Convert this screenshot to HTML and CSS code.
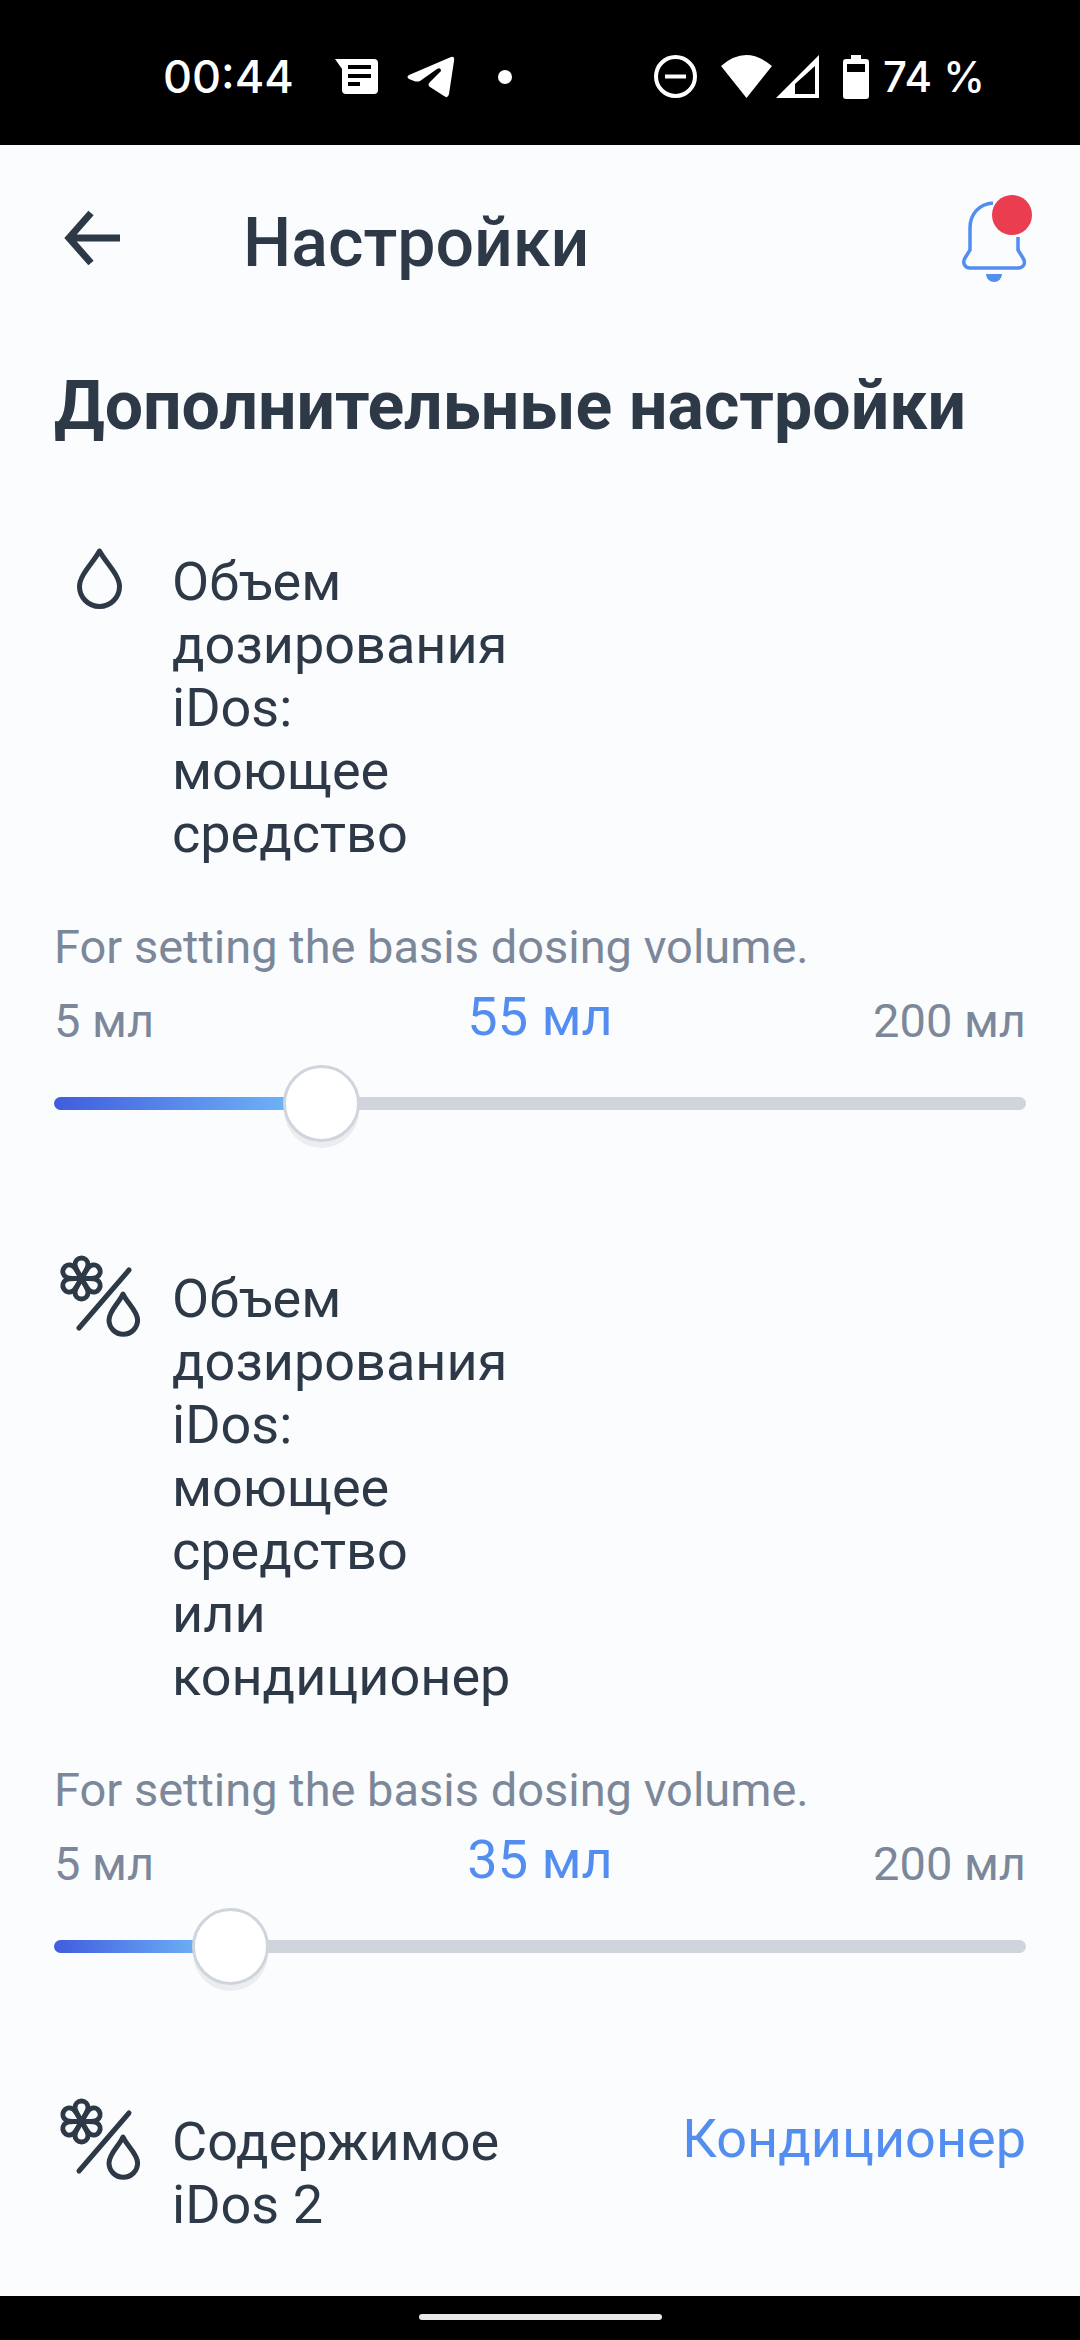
FILE: index.html
```html
<!DOCTYPE html>
<html lang="ru">
<head>
<meta charset="utf-8">
<meta name="viewport" content="width=device-width, initial-scale=1">
<title>Настройки</title>
<link rel="stylesheet" href="styles.css">
</head>
<body>
<svg class="sprite" aria-hidden="true">
  <symbol id="flower-drop" viewBox="0 0 90 90">
    <g fill="none" stroke="currentColor" stroke-width="5" stroke-linecap="round" stroke-linejoin="round">
      <g transform="translate(27.500 28.500)">
        <path id="petal" d="M0 0C-3-6-6.500-10-6.500-14a6.500 6.500 0 0 1 13 0C6.500-10 3-6 0 0Z"/>
        <use href="#petal" transform="rotate(60)"/>
        <use href="#petal" transform="rotate(120)"/>
        <use href="#petal" transform="rotate(180)"/>
        <use href="#petal" transform="rotate(240)"/>
        <use href="#petal" transform="rotate(300)"/>
      </g>
      <path d="M75 20 25 78"/>
      <path d="M69 44C65 53 55 61 55 70a14.300 14.300 0 0 0 28.600 0C83.600 61 73 53 69 44Z"/>
    </g>
  </symbol>
</svg>

<div class="screen">
  <div class="status-bar">
    <div class="status-group">
      <span class="clock">00:44</span>
      <svg class="status-message" width="43" height="36" viewBox="0 0 43 36"><path fill="#fff" fill-rule="evenodd" d="M0 0H39a4 4 0 0 1 4 4V31a4 4 0 0 1-4 4H11a4 4 0 0 1-4-4V10ZM13 6V10H36V6ZM13 15V19H36V15ZM13 23V27H25V23Z"/></svg>
      <svg class="status-plane" width="48" height="42" viewBox="0 0 48 42"><path fill="#fff" d="M2 19 44 1Q48 0 47 5L42 38Q41 43 37 40L23 31Q20 29 23 26L34 15Q34 11 30 13L13 25Q10 26 7 25L2 23Q-1 21 2 19Z"/></svg>
      <span class="status-dot"></span>
    </div>
    <div class="status-group">
      <svg width="43" height="43" viewBox="0 0 43 43"><g fill="none" stroke="#fff" stroke-width="4"><circle cx="21.500" cy="21.500" r="19.500"/><path d="M11 21.500H32"/></g></svg>
      <svg class="status-signal" width="98" height="43" viewBox="0 0 98 43"><path fill="#fff" d="M0 11Q25-11 51 11L25.500 43Z"/><path fill="#fff" fill-rule="evenodd" d="M55 43 98 0V43ZM74 29V39H94V11Z"/></svg>
      <svg class="status-battery" width="26" height="44" viewBox="0 0 26 44"><path fill="#fff" fill-rule="evenodd" d="M8 0H18V4H23a3 3 0 0 1 3 3V41a3 3 0 0 1-3 3H3a3 3 0 0 1-3-3V7A3 3 0 0 1 3 4H8ZM4 9V17H22V9Z"/></svg>
      <span class="battery-level">74 %</span>
    </div>
  </div>

  <header class="app-bar">
    <button class="icon-button" type="button" aria-label="Назад">
      <svg width="56" height="56" viewBox="0 0 56 56"><path d="M56 28H6M27 3 5 28 27 53" fill="none" stroke="currentColor" stroke-width="7"/></svg>
    </button>
    <h1 class="app-title">Настройки</h1>
    <button class="icon-button" type="button" aria-label="Уведомления">
      <svg width="72" height="90" viewBox="0 0 72 90"><path d="M31 10C17 11 8 21 8 35V57L3 65C0 70 3 75 8 75H56C62 75 64 70 61 65L56 57V44" fill="none" stroke="#548df0" stroke-width="3.500"/><path d="M24 81H40A8 8 0 0 1 24 81Z" fill="#548df0"/><circle cx="50" cy="22" r="20" fill="#ea3d50"/></svg>
    </button>
  </header>

  <main class="content">
    <h2 class="section-title">Дополнительные настройки</h2>

    <section class="setting">
      <div class="setting-head">
        <svg width="90" height="90" viewBox="0 0 90 90" aria-hidden="true"><path d="M45.500 18C39 30 25.500 42 25.500 53.500a20 20 0 0 0 40 0C65.500 42 52 30 45.500 18Z" fill="none" stroke="currentColor" stroke-width="5" stroke-linejoin="round"/></svg>
        <label class="setting-label" for="dose-1">Объем дозирования iDos: моющее средство</label>
      </div>
      <p class="hint">For setting the basis dosing volume.</p>
      <div class="scale">
        <span>5 мл</span>
        <output class="value" for="dose-1">55 мл</output>
        <span class="scale-max">200 мл</span>
      </div>
      <input class="slider" id="dose-1" type="range" min="5" max="200" value="55" style="--fill: 25%">
    </section>

    <section class="setting">
      <div class="setting-head">
        <svg width="90" height="90" aria-hidden="true"><use href="#flower-drop"/></svg>
        <label class="setting-label" for="dose-2">Объем дозирования iDos: моющее средство или кондиционер</label>
      </div>
      <p class="hint">For setting the basis dosing volume.</p>
      <div class="scale">
        <span>5 мл</span>
        <output class="value" for="dose-2">35 мл</output>
        <span class="scale-max">200 мл</span>
      </div>
      <input class="slider" id="dose-2" type="range" min="5" max="200" value="35" style="--fill: 16%">
    </section>

    <section class="setting">
      <div class="setting-head">
        <svg width="90" height="90" aria-hidden="true"><use href="#flower-drop"/></svg>
        <span class="setting-label">Содержимое iDos 2</span>
        <button class="choice" type="button">Кондиционер</button>
      </div>
    </section>
  </main>

  <div class="nav-bar"><span class="nav-handle"></span></div>
</div>
</body>
</html>
```

FILE: styles.css
```css
* {
  box-sizing: border-box;
}

body {
  margin: 0;
  background: #fafcfe;
  color: #2e3947;
  font-family: Roboto, "Noto Sans", sans-serif;
}

h1,
h2,
p {
  margin: 0;
}

svg {
  display: block;
  flex: none;
}

button {
  padding: 0;
  border: 0;
  background: none;
  color: inherit;
  font: inherit;
}

.sprite {
  position: absolute;
  width: 0;
  height: 0;
}

.screen {
  display: flex;
  flex-direction: column;
  min-height: 100vh;
}

/* System status bar */

.status-bar {
  display: flex;
  align-items: center;
  justify-content: space-between;
  padding: 8px 95px 0 163px;
  height: 145px;
  background: #000;
  color: #fff;
  font-family: Inter, sans-serif;
  font-size: 45px;
  font-weight: 500;
}

.status-group {
  display: flex;
  align-items: center;
}

.clock {
  margin-right: 41px;
}

.status-message {
  margin-right: 29px;
}

.status-dot {
  width: 14px;
  height: 14px;
  margin-left: 43px;
  border-radius: 50%;
  background: #fff;
}

.status-signal {
  margin: 0 24px;
}

.battery-level {
  margin-left: 14px;
  font-size: 42px;
}

/* App bar */

.app-bar {
  display: flex;
  align-items: center;
  padding: 48px 46px 0 64px;
}

.icon-button {
  display: flex;
}

.app-title {
  flex: 1;
  margin-left: 123px;
  padding-top: 10px;
  font-size: 68px;
  font-weight: 500;
  line-height: 80px;
}

/* Settings */

.content {
  flex: 1;
  padding: 0 54px;
}

.section-title {
  margin-top: 83px;
  font-size: 68px;
  font-weight: 700;
  line-height: 80px;
}

.setting {
  padding-top: 87px;
}

.setting + .setting {
  padding-top: 105px;
}

.setting-head {
  display: flex;
  align-items: flex-start;
  gap: 28px;
}

.setting-label {
  width: 35%;
  padding-top: 17px;
  font-size: 54px;
  line-height: 63px;
}

.choice {
  margin-left: auto;
  padding-top: 14px;
  color: #548df0;
  font-size: 54px;
  line-height: 63px;
}

.hint {
  margin-top: 54px;
  color: #7c8899;
  font-size: 47px;
  line-height: 56px;
}

.scale {
  display: grid;
  grid-template-columns: 1fr auto 1fr;
  align-items: end;
  margin-top: 12px;
  color: #7c8899;
  font-size: 47px;
  line-height: 60px;
}

.scale-max {
  text-align: right;
}

.value {
  padding-bottom: 4px;
  color: #548df0;
  font-size: 54px;
}

.slider {
  display: block;
  width: 100%;
  height: 84px;
  margin: 10px 0 0;
  background: none;
  appearance: none;
}

.slider::-webkit-slider-runnable-track {
  height: 13px;
  border-radius: 7px;
  background: linear-gradient(90deg, #405cde, #70b6f8) no-repeat left / var(--fill) 100%, #d0d4dc;
}

.slider::-webkit-slider-thumb {
  width: 77px;
  height: 77px;
  margin-top: -32px;
  border: 3px solid #d0d4dc;
  border-radius: 50%;
  background: #fff;
  box-shadow: 0 7px 0 -1px #ecedf1;
  appearance: none;
}

/* System navigation bar */

.nav-bar {
  display: flex;
  justify-content: center;
  height: 44px;
  padding-top: 18px;
  background: #000;
}

.nav-handle {
  width: 243px;
  height: 6px;
  border-radius: 3px;
  background: #e8e8ea;
}
```
